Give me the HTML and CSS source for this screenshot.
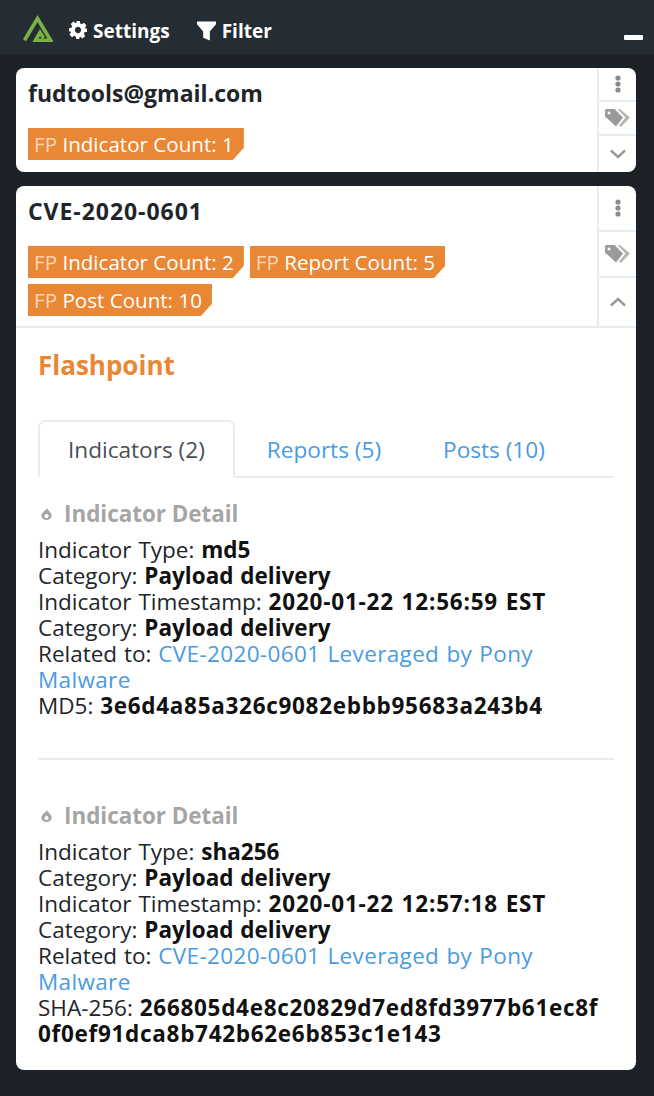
FILE: index.html
```html
<!DOCTYPE html>
<html lang="en">
<head>
<meta charset="utf-8">
<title>Flashpoint</title>
<link rel="stylesheet" href="styles.css">
</head>
<body>
<header class="topbar">
  <svg class="logo" viewBox="0 0 31 27" width="31" height="27"><path fill="none" stroke="#7db043" stroke-width="3.600" stroke-linejoin="miter" d="M2.500 25.200 15.500 3.500 28.500 25.200H13.500L18 17.500 21.500 23"/></svg>
  <span class="nav-item nav-settings">
    <svg class="nav-icon" viewBox="0 0 20 20" width="18" height="18"><path fill="#fff" fill-rule="evenodd" d="M8 0h4l.5 2.700 1.800.8L16.600 2l2.800 2.800-1.500 2.300.8 1.800L20 8v4l-2.700.5-.8 1.800 1.500 2.300-2.800 2.800-2.300-1.500-1.800.8L12 20H8l-.5-2.700-1.800-.8-2.300 1.500L.6 15.200l1.500-2.300-.8-1.800L0 12V8l2.700-.5.8-1.800L2 3.400 4.800.6l2.300 1.500 1.800-.8ZM10 6.500a3.500 3.500 0 1 0 .01 0Z"/></svg>
    Settings
  </span>
  <span class="nav-item">
    <svg class="nav-icon" viewBox="0 0 20 20" width="19" height="20"><path fill="#fff" d="M0 0h20v3l-6.500 7.500V20l-7-3v-6.500L0 3Z"/></svg>
    Filter
  </span>
  <span class="minimize"></span>
</header>
<main class="list">
  <section class="card">
    <div class="card-top">
      <div class="card-main">
        <h2 class="entity">fudtools@gmail.com</h2>
        <div class="tags">
          <span class="tag"><span class="tag-fp">FP</span> Indicator Count: 1</span>
        </div>
      </div>
      <div class="actions">
        <button class="action action-compact"><svg viewBox="0 0 8 18" width="8" height="18"><g fill="#8b8b8b"><circle cx="4" cy="3" r="2.600"/><circle cx="4" cy="9" r="2.600"/><circle cx="4" cy="15" r="2.600"/></g></svg></button>
        <button class="action action-compact"><svg viewBox="0 0 25 18" width="25" height="18"><path fill="#9a9a9a" fill-rule="evenodd" d="M0 1.500Q0 0 1.500 0H9.500L18 8.500 11 17.500 0 7.500ZM4 2.500a1.500 1.500 0 1 0 .01 0Z"/><path fill="#b5b5b5" d="M12.500 0H15L25 8.500 16 18 14 16.500 20.500 8.500Z"/></svg></button>
        <button class="action action-last"><svg viewBox="0 0 18 10" width="18" height="10"><path d="M2 1.500 9 8l7-6.500" fill="none" stroke="#9a9a9a" stroke-width="2.400"/></svg></button>
      </div>
    </div>
  </section>
  <section class="card">
    <div class="card-top card-top-open">
      <div class="card-main">
        <h2 class="entity entity-code">CVE-2020-0601</h2>
        <div class="tags tags-open">
          <span class="tag"><span class="tag-fp">FP</span> Indicator Count: 2</span>
          <span class="tag"><span class="tag-fp">FP</span> Report Count: 5</span>
          <span class="tag"><span class="tag-fp">FP</span> Post Count: 10</span>
        </div>
      </div>
      <div class="actions">
        <button class="action action-tall"><svg viewBox="0 0 8 18" width="8" height="18"><g fill="#8b8b8b"><circle cx="4" cy="3" r="2.600"/><circle cx="4" cy="9" r="2.600"/><circle cx="4" cy="15" r="2.600"/></g></svg></button>
        <button class="action action-tall"><svg viewBox="0 0 25 18" width="25" height="18"><path fill="#9a9a9a" fill-rule="evenodd" d="M0 1.500Q0 0 1.500 0H9.500L18 8.500 11 17.500 0 7.500ZM4 2.500a1.500 1.500 0 1 0 .01 0Z"/><path fill="#b5b5b5" d="M12.500 0H15L25 8.500 16 18 14 16.500 20.500 8.500Z"/></svg></button>
        <button class="action action-last"><svg viewBox="0 0 18 10" width="18" height="10"><path d="M2 8.500 9 2l7 6.500" fill="none" stroke="#9a9a9a" stroke-width="2.400"/></svg></button>
      </div>
    </div>
    <div class="details">
      <h3 class="source">Flashpoint</h3>
      <nav class="tabs">
        <a class="tab tab-active">Indicators (2)</a>
        <a class="tab">Reports (5)</a>
        <a class="tab">Posts (10)</a>
      </nav>
      <article class="indicator">
        <h4 class="indicator-title"><svg viewBox="0 0 12 14" width="11" height="12"><path fill="#a5a5a5" fill-rule="evenodd" d="M6 0C7 2.500 12 4.500 12 9A6 5 0 0 1 0 9C0 6.500 2 5.500 3 3.500 4 4 5.500 2.500 6 0ZM6 6.500C6.500 7.500 8.500 8 8.500 9.500A2.500 2.300 0 0 1 3.500 9.500C3.500 8.500 5 8 6 6.500Z"/></svg> Indicator Detail</h4>
        <p class="row">Indicator Type: <b>md5</b></p>
        <p class="row">Category: <b>Payload delivery</b></p>
        <p class="row">Indicator Timestamp: <b class="stamp">2020-01-22 12:56:59 EST</b></p>
        <p class="row">Category: <b>Payload delivery</b></p>
        <p class="row">Related to: <a class="link">CVE-2020-0601 Leveraged by Pony Malware</a></p>
        <p class="row">MD5: <b class="hash">3e6d4a85a326c9082ebbb95683a243b4</b></p>
      </article>
      <hr class="divider">
      <article class="indicator">
        <h4 class="indicator-title"><svg viewBox="0 0 12 14" width="11" height="12"><path fill="#a5a5a5" fill-rule="evenodd" d="M6 0C7 2.500 12 4.500 12 9A6 5 0 0 1 0 9C0 6.500 2 5.500 3 3.500 4 4 5.500 2.500 6 0ZM6 6.500C6.500 7.500 8.500 8 8.500 9.500A2.500 2.300 0 0 1 3.500 9.500C3.500 8.500 5 8 6 6.500Z"/></svg> Indicator Detail</h4>
        <p class="row">Indicator Type: <b>sha256</b></p>
        <p class="row">Category: <b>Payload delivery</b></p>
        <p class="row">Indicator Timestamp: <b class="stamp">2020-01-22 12:57:18 EST</b></p>
        <p class="row">Category: <b>Payload delivery</b></p>
        <p class="row">Related to: <a class="link">CVE-2020-0601 Leveraged by Pony Malware</a></p>
        <p class="row">SHA-256: <b class="hash">266805d4e8c20829d7ed8fd3977b61ec8f0f0ef91dca8b742b62e6b853c1e143</b></p>
      </article>
    </div>
  </section>
</main>
</body>
</html>
```
FILE: styles.css
```css
* { box-sizing: border-box; }
html, body { margin: 0; height: 100%; }
body {
  background: #1c2128;
  color: #212529;
  font-family: "Open Sans", "Noto Sans", sans-serif;
  font-size: 22.500px;
  line-height: 26px;
  overflow: hidden;
}
.topbar {
  height: 54px;
  background: #252d34;
  display: flex;
  align-items: center;
  padding: 2px 11px 0 22px;
  color: #fff;
}
.logo { margin-right: 16px; flex: none; }
.nav-item {
  display: flex;
  align-items: center;
  gap: 6px;
  font-size: 19px;
  font-weight: 700;
  margin-top: 6px;
  margin-right: 27px;
}
.nav-icon { flex: none; }
.nav-settings .nav-icon { margin-top: -2px; }
.minimize {
  width: 19px;
  height: 5px;
  background: #fff;
  border-radius: 1px;
  margin-left: auto;
  margin-top: 19px;
}
.list {
  display: flex;
  flex-direction: column;
  gap: 14px;
  padding: 14px 18px 0 16px;
}
.card {
  background: #fff;
  border-radius: 8px;
  overflow: hidden;
}
.card-top { display: flex; }
.card-top-open { border-bottom: 2px solid #e9ecef; }
.card-main { flex: 1; padding: 10px 12px 0; }
.entity {
  margin: 0;
  font-size: 23px;
  font-weight: 700;
  line-height: 30px;
  color: #212529;
}
.entity-code { letter-spacing: .95px; }
.tags { display: flex; flex-wrap: wrap; gap: 6px; margin-top: 20px; padding-bottom: 12px; }
.tags-open { padding-bottom: 10px; }
.tag {
  background: #e98735;
  color: #fff;
  height: 32px;
  line-height: 32px;
  font-size: 20.600px;
  padding: 0 10px 0 6px;
  clip-path: polygon(0 0, 100% 0, 100% 62%, calc(100% - 11px) 100%, 0 100%);
}
.tag-fp { opacity: .65; }
.actions {
  width: 39px;
  flex: none;
  display: flex;
  flex-direction: column;
  border-left: 2px solid #e9ecef;
}
.action {
  border: 0;
  background: none;
  padding: 0;
  display: flex;
  align-items: center;
  justify-content: center;
  flex: 1;
  border-bottom: 2px solid #e9ecef;
}
.action-compact { flex: none; height: 34px; }
.action-tall { flex: none; height: 46px; }
.action-last { border-bottom: 0; }
.details { padding: 20px 22px 23px; }
.source {
  margin: 0 0 38px;
  color: #e98735;
  font-size: 26px;
  font-weight: 700;
  line-height: 34px;
}
.tabs { display: flex; gap: 2px; border-bottom: 2px solid #e9ecef; }
.tab {
  color: #4a9be0;
  height: 58px;
  line-height: 56px;
  font-size: 22.600px;
  padding: 0 28px;
  margin-bottom: -2px;
  border: 2px solid transparent;
}
.tab-active {
  color: #495057;
  background: #fff;
  border-color: #e9ecef #e9ecef #fff;
  border-radius: 7px 7px 0 0;
}
.indicator { padding-top: 20px; }
.indicator-title {
  display: flex;
  align-items: center;
  gap: 12px;
  margin: 0 0 7px;
  color: #a5a5a5;
  font-size: 22.400px;
  font-weight: 700;
  line-height: 32px;
  padding-left: 3px;
}
.row { margin: 0; padding-right: 4px; word-spacing: 1px; }
.row b { color: #111; }
.row .stamp { letter-spacing: .8px; }
.row .hash { letter-spacing: .7px; word-break: break-all; }
.link { color: #4a9be0; letter-spacing: .35px; }
.divider { border: 0; border-top: 2px solid #e9ecef; margin: 39px 0 20px; }
```
